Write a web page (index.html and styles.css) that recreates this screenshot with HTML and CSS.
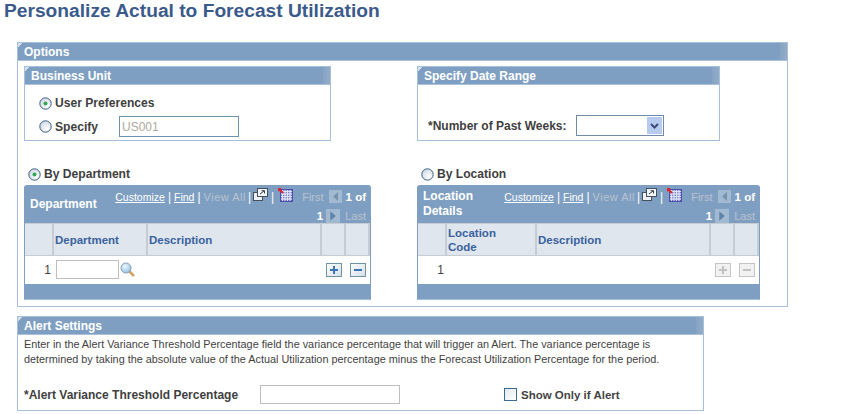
FILE: index.html
```html
<!DOCTYPE html>
<html lang="en">
<head>
<meta charset="utf-8">
<title>Personalize Actual to Forecast Utilization</title>
<link rel="stylesheet" href="styles.css">
</head>
<body>
<svg class="defs" width="0" height="0" aria-hidden="true">
  <defs>
    <radialGradient id="rg" cx="65%" cy="70%" r="75%"><stop offset="0" stop-color="#ffffff"/><stop offset="1" stop-color="#cfd8e4"/></radialGradient>
    <linearGradient id="btn" x1="0" y1="0" x2="1" y2="1"><stop offset="0" stop-color="#ffffff"/><stop offset="1" stop-color="#d3dde8"/></linearGradient>
    <radialGradient id="lens" cx="40%" cy="35%" r="70%"><stop offset="0" stop-color="#f0f8fd"/><stop offset="1" stop-color="#8dbde4"/></radialGradient>
    <symbol id="radio-off" viewBox="0 0 13 13"><circle cx="6.5" cy="6.5" r="5.7" fill="url(#rg)" stroke="#3b5f7f" stroke-width="1"/></symbol>
    <symbol id="radio-on" viewBox="0 0 13 13"><circle cx="6.5" cy="6.5" r="5.7" fill="url(#rg)" stroke="#3b5f7f" stroke-width="1"/><circle cx="6.5" cy="6.5" r="2" fill="#2fa84f"/></symbol>
    <symbol id="plus" viewBox="0 0 16 14"><rect x=".5" y=".5" width="15" height="13" fill="url(#btn)" stroke="#6d95a5"/><path d="M8 3v8M4 7h8" stroke="#3a76b4" stroke-width="2"/></symbol>
    <symbol id="minus" viewBox="0 0 16 14"><rect x=".5" y=".5" width="15" height="13" fill="url(#btn)" stroke="#6d95a5"/><path d="M4 7h8" stroke="#3a76b4" stroke-width="2"/></symbol>
    <symbol id="plus-off" viewBox="0 0 16 14"><rect x=".5" y=".5" width="15" height="13" fill="#f1f1f1" stroke="#c4c4c4"/><path d="M8 3v8M4 7h8" stroke="#c2c2c2" stroke-width="2"/></symbol>
    <symbol id="minus-off" viewBox="0 0 16 14"><rect x=".5" y=".5" width="15" height="13" fill="#f1f1f1" stroke="#c4c4c4"/><path d="M4 7h8" stroke="#c2c2c2" stroke-width="2"/></symbol>
    <symbol id="lookup" viewBox="0 0 15 15"><path d="M9 9l5 5" stroke="#d0a26a" stroke-width="2.6"/><circle cx="6" cy="6" r="5" fill="url(#lens)" stroke="#8ba0b4"/></symbol>
    <symbol id="popout" viewBox="0 0 15 13"><rect x=".5" y="4.5" width="9" height="8" fill="#eef2f6" stroke="#44505c"/><rect x="4.5" y=".5" width="10" height="8" fill="#f4f7fa" stroke="#44505c"/><path d="M7 6l4-3M8.5 2.700H11.500V5.500" fill="none" stroke="#333d48"/></symbol>
    <symbol id="gridicon" viewBox="0 0 15 14"><rect x="2" y="1" width="13" height="13" fill="#4a4fb0"/><path d="M4.500 2v11M7 2v11M9.500 2v11M12 2v11M3 3.500h11M3 6h11M3 8.500h11M3 11h11" stroke="#dfe3f7" stroke-width="1.300"/><path d="M0 0l5 5M0 3.200V0h3.200" fill="none" stroke="#e0262a" stroke-width="2"/></symbol>
    <symbol id="prev" viewBox="0 0 13 13"><rect width="13" height="13" fill="#a2b9d2"/><path d="M4 6.500l5-4.500v9z" fill="#7792ad"/></symbol>
    <symbol id="next" viewBox="0 0 13 13"><rect width="13" height="13" fill="#a2b9d2"/><path d="M9 6.500l-5-4.500v9z" fill="#5f82a8"/></symbol>
  </defs>
</svg>

<h1 class="page-title">Personalize Actual to Forecast Utilization</h1>

<section class="panel options">
  <h2 class="bar">Options</h2>
  <div class="options-body">
    <div class="top-row">
      <section class="panel bu">
        <h3 class="bar">Business Unit</h3>
        <div class="bu-body">
          <label class="radio-line"><svg class="radio"><use href="#radio-on"/></svg>User Preferences</label>
          <div class="specify">
            <label class="radio-line specify-label"><svg class="radio"><use href="#radio-off"/></svg>Specify</label>
            <input class="field field-blue" type="text" value="US001" disabled>
          </div>
        </div>
      </section>
      <section class="panel dates">
        <h3 class="bar">Specify Date Range</h3>
        <div class="dates-body">
          <span class="label">*Number of Past Weeks:</span>
          <span class="select"><span class="select-arrow"><svg width="9" height="6" viewBox="0 0 9 6"><path d="M1 1l3.500 3.500L8 1" fill="none" stroke="#3e4a78" stroke-width="2"/></svg></span></span>
        </div>
      </section>
    </div>

    <div class="grid-row">
      <div class="grid-col">
        <label class="radio-line by"><svg class="radio"><use href="#radio-on"/></svg>By Department</label>
        <div class="grid">
          <div class="grid-head">
            <div class="grid-title">Department</div>
            <div class="nav">
              <div class="nav-line"><a>Customize</a><i>|</i><a>Find</a><i>|</i><span class="off viewall">View All</span><i>|</i><svg class="ic-pop"><use href="#popout"/></svg><i class="sep2">|</i><svg class="ic-grid"><use href="#gridicon"/></svg><span class="off first">First</span><svg class="ic-nav"><use href="#prev"/></svg><b>1 of</b></div>
              <div class="nav-line"><b>1</b><svg class="ic-nav next"><use href="#next"/></svg><span class="off">Last</span></div>
            </div>
          </div>
          <table class="tbl dept">
            <thead><tr><th></th><th>Department</th><th>Description</th><th></th><th></th></tr></thead>
            <tbody><tr>
              <td class="num">1</td>
              <td colspan="2"><div class="lookup-cell"><input class="field field-grey" type="text"><svg class="ic-look"><use href="#lookup"/></svg></div></td>
              <td class="act"><svg class="ic-btn"><use href="#plus"/></svg></td>
              <td class="act"><svg class="ic-btn"><use href="#minus"/></svg></td>
            </tr></tbody>
          </table>
          <div class="grid-foot"></div>
        </div>
      </div>

      <div class="grid-col loc-col">
        <label class="radio-line by"><svg class="radio"><use href="#radio-off"/></svg>By Location</label>
        <div class="grid">
          <div class="grid-head">
            <div class="grid-title loc-title">Location Details</div>
            <div class="nav">
              <div class="nav-line"><a>Customize</a><i>|</i><a>Find</a><i>|</i><span class="off viewall">View All</span><i>|</i><svg class="ic-pop"><use href="#popout"/></svg><i class="sep2">|</i><svg class="ic-grid"><use href="#gridicon"/></svg><span class="off first">First</span><svg class="ic-nav"><use href="#prev"/></svg><b>1 of</b></div>
              <div class="nav-line"><b>1</b><svg class="ic-nav next"><use href="#next"/></svg><span class="off">Last</span></div>
            </div>
          </div>
          <table class="tbl loc">
            <thead><tr><th></th><th class="wrap">Location Code</th><th>Description</th><th></th><th></th></tr></thead>
            <tbody><tr>
              <td class="num">1</td>
              <td colspan="2"></td>
              <td class="act"><svg class="ic-btn"><use href="#plus-off"/></svg></td>
              <td class="act"><svg class="ic-btn"><use href="#minus-off"/></svg></td>
            </tr></tbody>
          </table>
          <div class="grid-foot"></div>
        </div>
      </div>
    </div>
  </div>
</section>

<section class="panel alert">
  <h2 class="bar">Alert Settings</h2>
  <p class="alert-text">Enter in the Alert Variance Threshold Percentage field the variance percentage that will trigger an Alert. The variance percentage is determined by taking the absolute value of the Actual Utilization percentage minus the Forecast Utilization Percentage for the period.</p>
  <div class="alert-form">
    <span class="label alert-label">*Alert Variance Threshold Percentage</span>
    <input class="field field-grey alert-input" type="text">
    <label class="check-line"><span class="check"></span>Show Only if Alert</label>
  </div>
</section>
</body>
</html>
```
FILE: styles.css
```css
* { box-sizing: border-box; }
html, body { margin: 0; padding: 0; background: #fff; }
body { width: 850px; height: 414px; overflow: hidden; font-family: "Liberation Sans", Arial, sans-serif; font-size: 12px; color: #3f3f3f; }
.defs { display: block; height: 0; }

.page-title { margin: 0; padding: 0 0 0 4px; height: 42px; font-size: 19.2px; line-height: 22px; font-weight: bold; color: #3b5a8c; }

.panel { border: 1px solid #a6c0dc; background: #fff; }
.bar {
  margin: 0; height: 18px; padding: 0 0 0 6px; line-height: 18px; font-size: 12px; font-weight: bold; color: #fff;
  background:
    linear-gradient(135deg, #d6e0ec 0 3px, transparent 3px),
    linear-gradient(90deg, #7f9fc2 calc(100% - 7px), #87a3c4 calc(100% - 7px), #93abc8);
  border-bottom: 1px solid #a9c1da;
}

.options { width: 771px; height: 265px; margin-left: 17px; }
.options-body { padding: 5px 0 0 6px; }
.top-row { display: flex; gap: 86px; }
.bu { width: 307px; height: 75px; }
.dates { width: 303px; height: 75px; }
.bu-body { padding: 11px 0 0 14px; }
.radio-line { display: flex; align-items: center; gap: 3px; font-size: 12.100px; font-weight: bold; color: #3f3f3f; line-height: 14px; }
.radio { width: 13px; height: 13px; flex: none; }
.specify { display: flex; align-items: center; margin-top: 6px; }
.specify-label { width: 80px; }
.field { display: block; padding: 0 2px; font-family: inherit; font-size: 12px; background: #fff; }
.field-blue { width: 120px; height: 21px; border: 1px solid #6f93ad; color: #b0a9a0; }
.field-grey { border: 1px solid #bfbfbf; }

.dates-body { display: flex; align-items: center; height: 21px; margin-top: 30px; padding-left: 10px; }
.label { font-weight: bold; color: #3f3f3f; }
.select { display: flex; justify-content: flex-end; align-items: center; width: 88px; height: 21px; margin-left: 9px; border: 1px solid #6f8bab; padding-right: 1px; background: #fff; }
.select-arrow { display: flex; align-items: center; justify-content: center; width: 15px; height: 17px; background: #b7cbf0; }

.grid-row { display: flex; gap: 46px; margin-top: 26px; }
.grid-col { width: 347px; }
.loc-col { width: 343px; }
.by { padding-left: 4px; height: 14px; margin-bottom: 4px; }
.grid { background: #7f9fc2; border-radius: 3px 3px 0 0; height: 115px; border: 1px solid #7f9fc2; border-top: 0; border-bottom-color: #a6c0dc; }
.grid-head { display: flex; height: 38px; justify-content: space-between; }
.grid-title { align-self: center; padding-left: 5px; font-weight: bold; color: #fff; font-size: 12px; line-height: 15px; }
.loc-title { width: 75px; }
.nav { width: 262px; flex: none; padding: 3px 4px 0 0; font-size: 11px; color: #fff; }
.nav-line { display: flex; justify-content: flex-end; align-items: center; height: 18px; }
.nav-line + .nav-line { margin-top: 1px; }
.nav a { color: #fff; text-decoration: underline; font-size: 10.500px; }
.nav i { font-style: normal; margin: 0 3px; color: #fff; font-size: 12px; }
.nav .viewall + i { margin: 0 2px; }
.nav .sep2 { margin: 0 4px 0 3px; }
.nav b { font-size: 11.500px; }
.off { color: #b9c2cf; font-size: 11px; }
.viewall { letter-spacing: .5px; }
.first { margin-left: 9px; }
.ic-pop { width: 15px; height: 13px; margin-top: -5px; }
.ic-grid { width: 15px; height: 14px; margin-top: -5px; }
.ic-nav { width: 13px; height: 13px; margin: -2px 4px 0 5px; }
.next { width: 14px; height: 14px; margin: 0 5px 0 3px; }

.tbl { width: 100%; border-collapse: collapse; table-layout: fixed; background: #fff; }
.tbl th { height: 32px; padding: 0 2px 0 1px; background: #dfe6ed; border: 1px solid #c6ccd2; border-width: 1px 2px 1px 0; text-align: left; font-size: 11.500px; line-height: 14px; font-weight: bold; color: #3a62a0; }
.tbl .wrap { padding-right: 30px; }
.tbl td { height: 28px; padding: 0; background: #fff; }
.tbl .num { text-align: right; padding-right: 2px; color: #3f3f3f; font-size: 12px; }
.dept th:nth-child(1) { width: 28px; }
.dept th:nth-child(2) { width: 94px; }
.dept th:nth-child(4), .dept th:nth-child(5) { width: 24px; }
.loc th:nth-child(1) { width: 28px; }
.loc th:nth-child(2) { width: 90px; }
.loc th:nth-child(4), .loc th:nth-child(5) { width: 24px; }
.lookup-cell { display: flex; align-items: center; padding-left: 3px; gap: 1px; }
.lookup-cell .field { width: 63px; height: 19px; }
.ic-look { width: 15px; height: 15px; }
.act { text-align: left; }
.ic-btn { display: block; width: 16px; height: 14px; margin-left: 5px; }
.grid-foot { height: 15px; background: #7f9fc2; }

.alert { width: 687px; height: 95px; margin: 9px 0 0 17px; }
.alert-text { margin: 0; padding: 2px 6px 0; font-size: 10.850px; line-height: 15px; color: #3f3f3f; }
.alert-form { display: flex; align-items: center; padding: 18px 0 0 6px; }
.alert-label { width: 236px; padding-top: 1px; }
.alert-input { width: 140px; height: 19px; }
.check-line { display: flex; align-items: center; gap: 4px; margin-left: 104px; font-size: 11.500px; font-weight: bold; color: #444; }
.check { width: 13px; height: 13px; border: 1px solid #3c6a90; background: linear-gradient(135deg, #e4e9ef, #fff); }
```
